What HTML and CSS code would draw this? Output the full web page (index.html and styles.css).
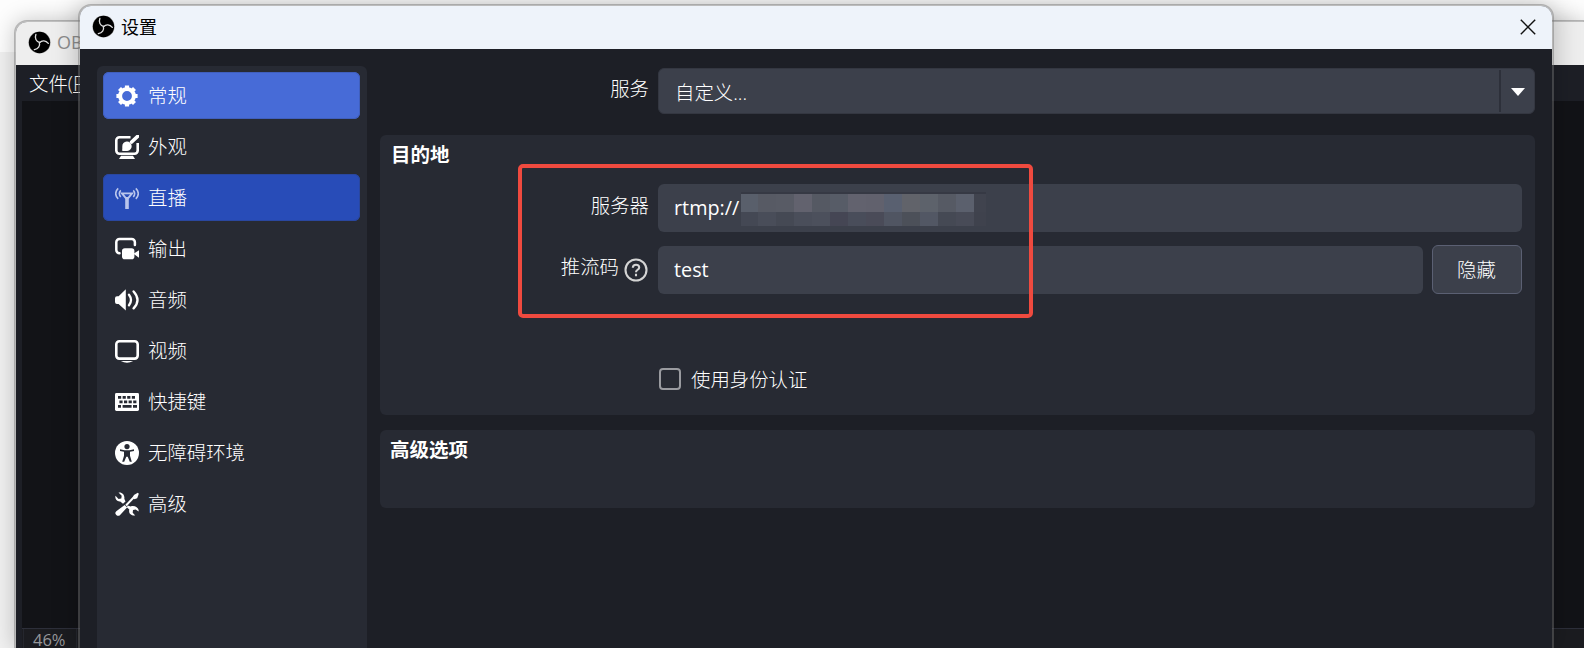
FILE: index.html
```
<!DOCTYPE html>
<html lang="zh-CN">
<head>
    <meta charset="UTF-8">
    <meta name="viewport" content="width=device-width, initial-scale=1.0">
    <title>设置</title>
    <link rel="stylesheet" href="styles.css">
</head>
<body>
    <svg width="0" height="0" class="defs">
        <symbol id="obs" viewBox="0 0 24 24">
            <circle cx="12" cy="12" r="11.6" fill="#aaa"/>
            <circle cx="12" cy="12" r="11.1" fill="#000"/>
            <g fill="none" stroke="#dedede" stroke-width="1.4" stroke-linecap="round">
                <path d="M8.2 3.6C6.8 7.4 8.4 11 12.2 11.9"/>
                <path d="M8.2 3.6C6.8 7.4 8.4 11 12.2 11.9" transform="rotate(120 12 12)"/>
                <path d="M8.2 3.6C6.8 7.4 8.4 11 12.2 11.9" transform="rotate(240 12 12)"/>
            </g>
        </symbol>
    </svg>

    <div class="main-window">
        <div class="main-title">
            <svg class="logo"><use href="#obs"/></svg>
            <span>OBS</span>
        </div>
        <div class="menu">文件(<u>F</u>)</div>
        <div class="preview"></div>
        <div class="status"><span>46%</span></div>
    </div>

    <div class="settings">
        <div class="title-bar">
            <svg class="logo"><use href="#obs"/></svg>
            <span>设置</span>
            <svg class="close" viewBox="0 0 16 16"><path d="M.8.8l14.4 14.4M15.2.8L.8 15.2"/></svg>
        </div>
        <div class="content">
            <ul class="sidebar">
                <li class="hover">
                    <svg viewBox="0 0 24 24"><circle cx="12" cy="12" r="6.9" fill="none" stroke="#fff" stroke-width="4"/><path d="M12 1.4v4M12 18.6v4M1.4 12h4M18.6 12h4M4.5 4.5l2.6 2.6M16.9 16.9l2.6 2.6M4.5 19.5l2.6-2.6M16.9 7.1l2.6-2.6" stroke="#fff" stroke-width="4.2"/></svg>
                    <span>常规</span>
                </li>
                <li>
                    <svg viewBox="0 0 24 24"><path d="M15.5 2.2H4.5A3.2 3.2 0 0 0 1.3 5.4v10.1a3.2 3.2 0 0 0 3.2 3.2h15a3.2 3.2 0 0 0 3.2-3.2V8" fill="none" stroke="#fff" stroke-width="2.6"/><path d="M6.8 15.5c.8-1 .4-1.8.5-4a4.7 4.7 0 1 1 5 4.4c-2 .2-4 .1-5.5-.4z" fill="#fff"/><path d="M22.8 1.2L16.6 7" stroke="#fff" stroke-width="3.6" stroke-linecap="round"/><path d="M6 20.8h12l2 3.2H4z" fill="#fff"/></svg>
                    <span>外观</span>
                </li>
                <li class="active">
                    <svg viewBox="0 0 24 24"><g fill="none" stroke="#b9c5ec"><path d="M3.2 2.3C-.1 5.3-.1 9.9 3.2 12.9M20.8 2.3c3.3 3 3.3 7.6 0 10.6M5.8 4.3c-2 1.8-2 4.8 0 6.6M18.2 4.3c2 1.8 2 4.8 0 6.6" stroke-width="1.6"/><path d="M7 7.4h10l-3.8 4.6h-2.4z" stroke-width="1.9"/><path d="M12 11v12" stroke-width="3.6"/></g></svg>
                    <span>直播</span>
                </li>
                <li>
                    <svg viewBox="0 0 24 24"><path d="M4.5 16.2A3.2 3.2 0 0 1 1.3 13V5.2A3.2 3.2 0 0 1 4.5 2h12.2a3.2 3.2 0 0 1 3.2 3.2V8" fill="none" stroke="#fff" stroke-width="2.5" stroke-linecap="round"/><rect x="7" y="11.2" width="12.4" height="11" rx="2.8" fill="#fff"/><path d="M18.5 16.8l5.5-3.6v7.6z" fill="#fff"/></svg>
                    <span>输出</span>
                </li>
                <li>
                    <svg viewBox="0 0 24 24"><path d="M0 10.2q0-2 2-2h1.6L10.8 1.3v21.2l-7.2-6.6H2q-2 0-2-2z" fill="#fff"/><path d="M14 6.7q4 5.2 0 10.6M18.6 3.4q7.8 8.6 0 17" fill="none" stroke="#fff" stroke-width="2.3" stroke-linecap="round"/></svg>
                    <span>音频</span>
                </li>
                <li>
                    <svg viewBox="0 0 24 24"><rect x="1.3" y="2.2" width="21.4" height="17.4" rx="3" fill="none" stroke="#fff" stroke-width="2.6"/><path d="M5.8 22h12.4q-6.2 3.4-12.4 0z" fill="#fff"/></svg>
                    <span>视频</span>
                </li>
                <li>
                    <svg viewBox="0 0 24 24"><rect y="3" width="24" height="18" rx="1.4" fill="#fff"/><path d="M3 7.4h18M4.4 11.8h17.4" stroke="#272a33" stroke-width="2.8" stroke-dasharray="3.2 1.4"/><path d="M3 16.4h3M7.6 16.4h9M18 16.4h4" stroke="#272a33" stroke-width="2.8"/></svg>
                    <span>快捷键</span>
                </li>
                <li>
                    <svg viewBox="0 0 24 24"><circle cx="12" cy="12" r="12" fill="#fff"/><circle cx="12" cy="5.6" r="2.6" fill="#272a33"/><path d="M5 8.3l4.5.9h5l4.5-.9v1.6l-4 .9v4l1.8 6h-2l-2.1-5h-1.4l-2.1 5h-2l1.8-6v-4l-4-.9z" fill="#272a33"/></svg>
                    <span>无障碍环境</span>
                </li>
                <li>
                    <svg viewBox="0 0 24 24"><path d="M3.5.5l3.2 3.2-.4 2.7-2.7.5L.5 3.8C-.3 6.4 1.4 9.8 5.2 9.4l2.8 2.4 2.5-2.2L9.3 6.8C10 3 7.2-.2 3.5.5zM12.5 13.4l3.2 1c4.6-1.4 8.6 2 7.9 5l-3-2-2.6.7-.3 2.6 2.5 2.8c-3.6.6-7-1.8-5.9-6l-2.3-2zM9.7 13l2.4 2.4-7 7.6q-1.8 1.7-3.8 0-2-2 0-3.8z" fill="#fff"/><path d="M11 13.5L20 4" stroke="#fff" stroke-width="1.9"/><path d="M22.8.8l1 1-1.6 4.4-2.8 1-1.5-1.5 1-2.8z" fill="#fff"/></svg>
                    <span>高级</span>
                </li>
            </ul>

            <div class="panel">
                <div class="row service">
                    <label>服务</label>
                    <div class="select"><span>自定义...</span><i class="arrow"></i></div>
                </div>

                <div class="group destination">
                    <h3>目的地</h3>
                    <div class="row server">
                        <label>服务器</label>
                        <div class="input">rtmp://<div class="mosaic">
                            <i style="background:#595f6b"></i><i style="background:#575a64"></i><i style="background:#585b65"></i><i style="background:#62626e"></i><i style="background:#555963"></i><i style="background:#575c67"></i><i style="background:#62626e"></i><i style="background:#61616d"></i><i style="background:#596070"></i><i style="background:#61636a"></i><i style="background:#5d626b"></i><i style="background:#565a64"></i><i style="background:#5b606d"></i><i style="background:#40434e"></i>
                            <i style="background:#444854"></i><i style="background:#494d59"></i><i style="background:#454954"></i><i style="background:#4a4e5a"></i><i style="background:#4c505c"></i><i style="background:#454654"></i><i style="background:#494d5a"></i><i style="background:#4a4b58"></i><i style="background:#505562"></i><i style="background:#4c5059"></i><i style="background:#525764"></i><i style="background:#454954"></i><i style="background:#484b57"></i><i style="background:#3f424d"></i>
                        </div></div>
                    </div>
                    <div class="row key">
                        <label>推流码
                            <svg class="help" viewBox="0 0 24 24"><circle cx="12" cy="12" r="10.5"/><path d="M8.8 9.7c.2-4 6.4-3.8 6.4-.3 0 2.4-3.2 2.3-3.2 4.8M12 15.8v2.4"/></svg>
                        </label>
                        <div class="input">test</div>
                        <button>隐藏</button>
                    </div>
                    <div class="check"><i></i>使用身份认证</div>
                </div>

                <div class="group advanced">
                    <h3>高级选项</h3>
                </div>
            </div>
        </div>
    </div>

    <div class="highlight"></div>
</body>
</html>
```

FILE: styles.css
```
* {
    padding: 0;
    margin: 0;
    box-sizing: border-box;
}
body {
    width: 1584px;
    height: 648px;
    overflow: hidden;
    position: relative;
    background: linear-gradient(#fdfdfd 52px, #f1f1f1 52px);
    color: #fff;
    font-family: "Open Sans", "Noto Sans CJK SC", sans-serif;
    font-size: 19.4px;
    font-weight: 300;
}
.defs {
    position: absolute;
}
.logo {
    width: 23px;
    height: 23px;
    flex: none;
}

/* main window behind the dialog */
.main-window {
    position: absolute;
    left: 14px;
    top: 20px;
    width: 1570px;
    height: 628px;
    border: 2px solid rgba(115, 115, 115, 0.45);
    border-right: 0;
    border-bottom: 0;
    border-radius: 13px 0 0 0;
    background: #1d1f26;
    background-clip: padding-box;
    overflow: hidden;
    box-shadow: 0 0 22px rgba(0, 0, 0, 0.22);
}
.main-title {
    height: 43px;
    background: #eeeeee;
    display: flex;
    align-items: center;
    gap: 6px;
    padding: 0 0 3px 12px;
    color: #8d8d8d;
    font-size: 18px;
    font-weight: 400;
}
.menu {
    height: 36px;
    line-height: 37px;
    padding-left: 13px;
}
.preview {
    height: 527px;
    margin-left: 6px;
    background: #121317;
}
.status {
    height: 20px;
    margin-left: 6px;
    border-top: 1px solid #2d2f3a;
    background: #1b1c20;
}
.status span {
    display: block;
    width: 54px;
    height: 19px;
    margin-left: 1px;
    padding-left: 9px;
    border: 1px solid #25272e;
    border-width: 0 1px;
    line-height: 21px;
    font-size: 16.5px;
    font-weight: 400;
    color: #96979a;
}

/* settings dialog */
.settings {
    position: absolute;
    left: 78px;
    top: 4px;
    width: 1476px;
    height: 644px;
    border: 2px solid rgba(115, 115, 115, 0.45);
    border-bottom: 0;
    border-radius: 13px 13px 0 0;
    background: #1d1f26;
    background-clip: padding-box;
    overflow: hidden;
    box-shadow: 0 0 26px rgba(0, 0, 0, 0.25);
}
.title-bar {
    height: 43px;
    background: #eef3fa;
    display: flex;
    align-items: center;
    gap: 6px;
    padding: 0 16px 3px 12px;
    color: #000;
    font-size: 18px;
    font-weight: 400;
}
.title-bar .close {
    width: 16px;
    height: 16px;
    margin: 1px 0 0 auto;
    fill: none;
    stroke: #111;
    stroke-width: 1.4;
}
.content {
    display: flex;
    gap: 13px;
    height: 599px;
    padding: 17px 17px 0;
}
.sidebar {
    width: 270px;
    padding: 6px 7px 0 6px;
    border-radius: 6px 6px 0 0;
    background: #272a33;
    list-style: none;
}
.sidebar li {
    display: flex;
    align-items: center;
    gap: 9px;
    height: 47px;
    margin-bottom: 4px;
    padding-left: 12px;
    border-radius: 6px;
}
.sidebar span {
    padding-bottom: 2px;
}
.sidebar svg {
    width: 24px;
    height: 24px;
    flex: none;
}
.sidebar .hover {
    background: #476bd7;
    box-shadow: inset 0 0 0 1px #405fbd;
}
.sidebar .active {
    background: #284cb8;
    box-shadow: inset 0 0 0 1px #2a479f;
}
.panel {
    flex: 1;
    padding-top: 2px;
}
.row {
    display: flex;
}
.row label {
    display: flex;
    justify-content: flex-end;
    flex: none;
}
.service label {
    width: 269px;
    margin-right: 9px;
    line-height: 41px;
}
.select {
    flex: 1;
    display: flex;
    height: 46px;
    padding-left: 16px;
    border: 1px solid #343741;
    border-radius: 6px;
    background: #3c404b;
    line-height: 47px;
}
.select .arrow {
    display: flex;
    align-items: center;
    justify-content: center;
    width: 35px;
    margin: 1px 0 1px auto;
    border-left: 2px solid #2d303a;
}
.arrow::before {
    content: "";
    border: 7px solid transparent;
    border-top: 8px solid #fff;
    border-bottom: 0;
    margin-top: 1px;
}
.group {
    border-radius: 6px;
    background: #272a33;
    padding-left: 11px;
}
.group h3 {
    height: 38px;
    font-size: 19.5px;
    font-weight: 600;
    line-height: 40px;
}
.destination {
    height: 280px;
    margin-top: 21px;
    padding-right: 13.5px;
}
.advanced {
    height: 78px;
    margin-top: 15px;
    padding-left: 10px;
}
.group .row label {
    width: 258px;
    margin-right: 9px;
    line-height: 43px;
}
.input {
    flex: 1;
    display: flex;
    height: 48px;
    padding-left: 16px;
    border-radius: 6px;
    background: #3c404b;
    line-height: 47px;
    font-size: 19.8px;
    font-weight: 400;
}
.server {
    margin-top: 11px;
}
.mosaic {
    display: grid;
    grid-template-columns: 17px repeat(12, 18px) 12px;
    grid-template-rows: 18px 14px;
    align-self: flex-start;
    margin: 8px 0 0 2px;
    border-top: 2px solid #363944;
}
.key {
    margin-top: 14px;
}
.group .key label {
    line-height: 42px;
}
.help {
    width: 24px;
    height: 24px;
    margin: 12px 1px 0 5px;
    fill: none;
    stroke: #d4d4d4;
    stroke-width: 2.1;
}
button {
    width: 90px;
    height: 49px;
    margin: -1px 0 0 9px;
    padding-bottom: 2px;
    border: 1px solid #5b6073;
    border-radius: 6px;
    background: #3c404b;
    color: #fff;
    font: inherit;
}
.check {
    display: flex;
    align-items: center;
    gap: 10px;
    margin: 70px 0 0 268px;
}
.check i {
    width: 22px;
    height: 22px;
    border: 2px solid #9a9ba0;
    border-radius: 4px;
}

/* annotation box */
.highlight {
    position: absolute;
    left: 518px;
    top: 164px;
    width: 515px;
    height: 154px;
    border: 4px solid #ef4a3f;
    border-radius: 5px;
}
```
